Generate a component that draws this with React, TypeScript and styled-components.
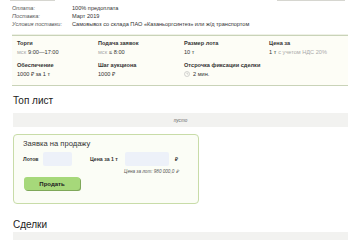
import React from "react";
import styled, { createGlobalStyle } from "styled-components";

const Global = createGlobalStyle`
  html, body { margin: 0; padding: 0; background: #ffffff; }
  body { font-family: "Liberation Sans", Arial, sans-serif; color: #333; }
`;

const Page = styled.div`
  width: 360px;
  height: 240px;
  overflow: hidden;
  padding: 0 12px;
  box-sizing: border-box;
`;

const TopBar = styled.div`
  display: flex;
  justify-content: space-between;
  margin: 0 3px 0 -2px;
  height: 2px;
`;

const TopStub = styled.div<{ $w: number }>`
  width: ${(p) => p.$w}px;
  height: 1px;
  background: #d6d6d0;
`;

const InfoTable = styled.div`
  padding: 2px 0 7px;
  display: grid;
  grid-template-columns: 60px 1fr;
  font-size: 5.6px;
  line-height: 8px;
`;

const InfoLabel = styled.div`
  color: #555;
  font-style: italic;
`;

const InfoValue = styled.div`
  color: #333;
`;

const Terms = styled.div`
  background: #fdfdf6;
  border-top: 1px solid #c9d3b8;
  border-bottom: 1px solid #c9d3b8;
  box-shadow: 0 -1px 0 #eef1e6;
  padding: 4px 0 8px 5px;
  display: grid;
  grid-template-columns: 81px 86px 85px 1fr;
  row-gap: 7px;
`;

const Term = styled.div`
  display: flex;
  flex-direction: column;
  gap: 3px;
  white-space: nowrap;
`;

const TermTitle = styled.div`
  font-size: 5.6px;
  line-height: 6px;
  font-weight: bold;
  color: #333;
`;

const TermValue = styled.div`
  font-size: 5.6px;
  line-height: 6px;
  color: #333;
  display: flex;
  align-items: center;
  gap: 2px;
`;

const Muted = styled.span`
  color: #aaa;
`;

const Clock = styled.svg`
  width: 6px;
  height: 6px;
  margin-right: 1px;
`;

const Heading = styled.h2`
  margin: 9px 0 0 1px;
  font-size: 10px;
  line-height: 12px;
  font-weight: normal;
  color: #222;
`;

const EmptyBar = styled.div`
  margin-top: 6px;
  margin-left: 1px;
  height: 14px;
  background: #f2f2f0;
  font-size: 4.6px;
  font-style: italic;
  color: #666;
  display: flex;
  align-items: center;
  justify-content: center;
`;

const FormCard = styled.div`
  margin: 7px 0 0 1px;
  width: 186px;
  box-sizing: border-box;
  height: 70px;
  border: 1px solid #c8dca8;
  border-radius: 4px;
  background: #fbfdf6;
  padding: 4px 9px 0;
`;

const FormTitle = styled.div`
  font-size: 7.6px;
  line-height: 9px;
  color: #333;
`;

const FormRow = styled.div`
  display: flex;
  align-items: center;
  margin-top: 4px;
  height: 14px;
`;

const FieldLabel = styled.span<{ $w: number }>`
  width: ${(p) => p.$w}px;
  font-size: 5.2px;
  font-weight: bold;
  color: #333;
`;

const Input = styled.div<{ $w: number }>`
  width: ${(p) => p.$w}px;
  height: 14px;
  background: #edf1f9;
  border-radius: 2px;
`;

const Gap = styled.div<{ $w: number }>`
  width: ${(p) => p.$w}px;
`;

const Currency = styled.span`
  margin-left: 6px;
  font-size: 5.2px;
  font-weight: bold;
`;

const Hint = styled.div`
  margin: 3px 0 0 101px;
  font-size: 4.6px;
  line-height: 5px;
  font-style: italic;
  color: #555;
`;

const SellButton = styled.button`
  display: block;
  margin-top: 3px;
  margin-left: 1px;
  width: 56px;
  height: 13px;
  border: none;
  border-radius: 3px;
  background: #a6d87a;
  box-shadow: 1px 1px 0 #7fa85a;
  font-family: "Liberation Sans", Arial, sans-serif;
  font-size: 6px;
  font-weight: bold;
  color: #222;
  padding: 0;
`;

const DealsHeading = styled(Heading)`
  margin-top: 15px;
`;

const DealsBar = styled.div`
  margin-top: 1px;
  margin-left: 1px;
  height: 12px;
  background: #f2f2f0;
`;

export default function App() {
  return (
    <>
      <Global />
      <Page>
        <TopBar>
          <TopStub $w={45} />
          <TopStub $w={68} />
        </TopBar>
        <InfoTable>
          <InfoLabel>Оплата:</InfoLabel>
          <InfoValue>100% предоплата</InfoValue>
          <InfoLabel>Поставка:</InfoLabel>
          <InfoValue>Март 2019</InfoValue>
          <InfoLabel>Условия поставки:</InfoLabel>
          <InfoValue>Самовывоз со склада ПАО «Казаньоргсинтез» или ж/д транспортом</InfoValue>
        </InfoTable>
        <Terms>
          <Term>
            <TermTitle>Торги</TermTitle>
            <TermValue>
              <Muted>мск</Muted> 9:00—17:00
            </TermValue>
          </Term>
          <Term>
            <TermTitle>Подача заявок</TermTitle>
            <TermValue>
              <Muted>мск</Muted> ≤ 8:00
            </TermValue>
          </Term>
          <Term>
            <TermTitle>Размер лота</TermTitle>
            <TermValue>10 т</TermValue>
          </Term>
          <Term>
            <TermTitle>Цена за</TermTitle>
            <TermValue>
              1 т <Muted>с учетом НДС 20%</Muted>
            </TermValue>
          </Term>
          <Term>
            <TermTitle>Обеспечение</TermTitle>
            <TermValue>1000 ₽ за 1 т</TermValue>
          </Term>
          <Term>
            <TermTitle>Шаг аукциона</TermTitle>
            <TermValue>1000 ₽</TermValue>
          </Term>
          <Term>
            <TermTitle>Отсрочка фиксации сделки</TermTitle>
            <TermValue>
              <Clock viewBox="0 0 12 12">
                <circle cx="6" cy="6" r="5" fill="none" stroke="#aaa" strokeWidth="1" />
                <path d="M6 3v3h2.5" fill="none" stroke="#aaa" strokeWidth="1" />
              </Clock>
              2 мин.
            </TermValue>
          </Term>
        </Terms>
        <Heading>Топ лист</Heading>
        <EmptyBar>пусто</EmptyBar>
        <FormCard>
          <FormTitle>Заявка на продажу</FormTitle>
          <FormRow>
            <FieldLabel $w={20}>Лотов</FieldLabel>
            <Input $w={29} />
            <Gap $w={18} />
            <FieldLabel $w={35}>Цена за 1 т</FieldLabel>
            <Input $w={44} />
            <Currency>₽</Currency>
          </FormRow>
          <Hint>Цена за лот: 980 000,0 ₽</Hint>
          <SellButton>Продать</SellButton>
        </FormCard>
        <DealsHeading>Сделки</DealsHeading>
        <DealsBar />
      </Page>
    </>
  );
}
